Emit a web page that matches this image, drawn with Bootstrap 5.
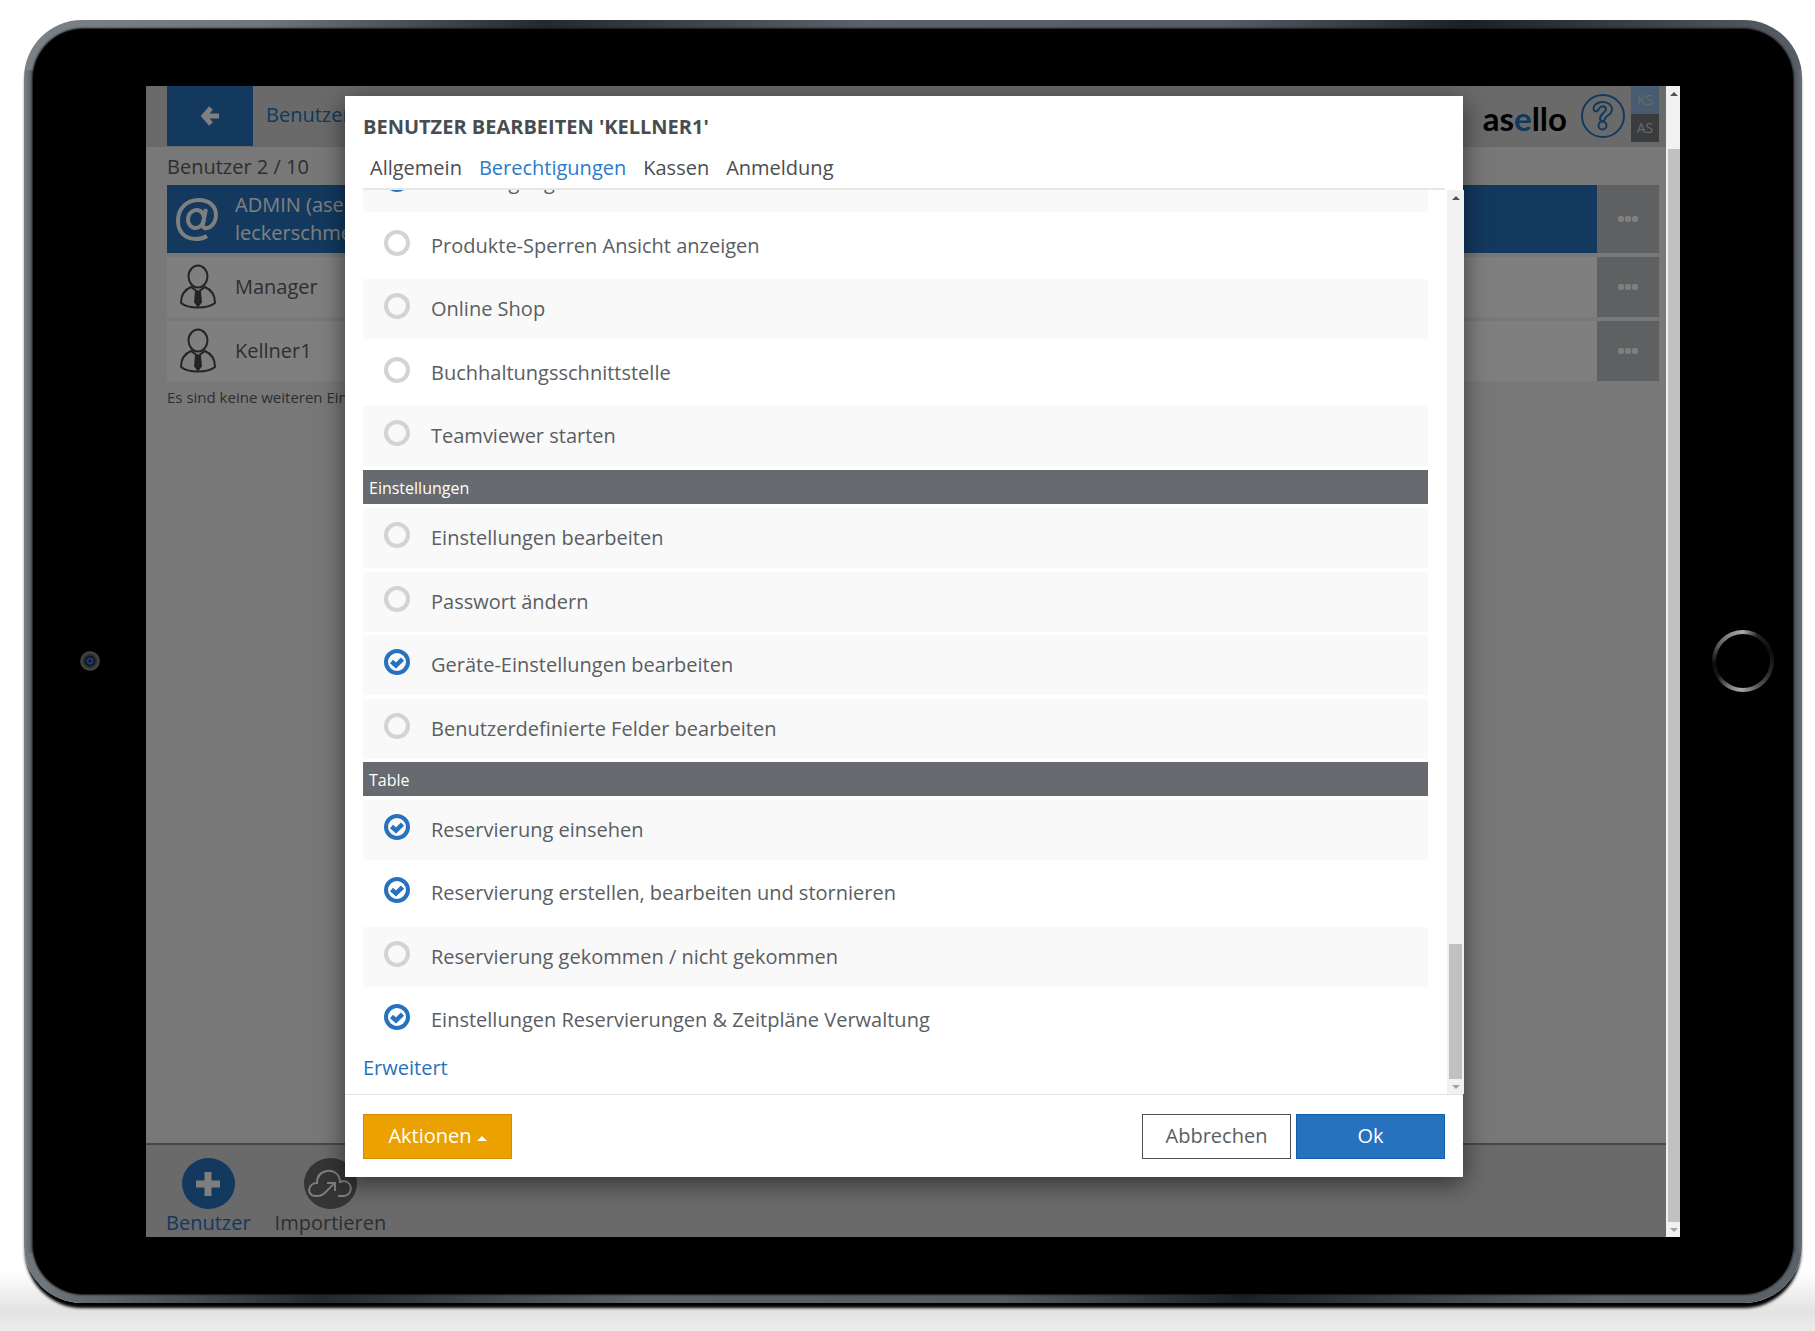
<!DOCTYPE html>
<html lang="de">
<head>
<meta charset="utf-8">
<meta name="viewport" content="width=device-width, initial-scale=1">
<title>asello – Benutzer bearbeiten</title>
<link href="https://cdn.jsdelivr.net/npm/bootstrap@5.3.0/dist/css/bootstrap.min.css" rel="stylesheet">
<style>
:root { --blue: #2672be; --ink: #5a5e62; --dark: #676a6e; }
body { font-family: "Open Sans", "Noto Sans", sans-serif; font-size: 20px; line-height: 28px; color: var(--ink); background: #fff; }
a { color: var(--blue); text-decoration: none; }
button { font-family: inherit; }

/* tablet */
.stage { height: 100vh; min-height: 900px; padding: 20px 13px 28px 24px; background: linear-gradient(to top, #ececec 0, #e3e3e3 20px, #fff 60px, #fff 100%); }
.tablet { padding: 9px; border-radius: 58px; background:
  linear-gradient(to right, #7b8286 0, #555c64 9px, transparent 9px, transparent calc(100% - 9px), #50565e calc(100% - 8px), #696f76 100%) 0 50px / 100% calc(100% - 100px) no-repeat,
  linear-gradient(100deg, #7b8286 0, #70777c 12%, #232a2e 26%, #5b6269 42%, #555c64 60%, #1a2125 72%, #5d636a 90%, #5b6169 100%);
  box-shadow: 0 6px 3px -1px #000; }
.bezel { background: #000; border-radius: 50px; padding: 57px 113px 57px 113px; box-shadow: 0 0 2px 1px #15181b; }
.camera { left: 47px; top: 50%; width: 20px; height: 20px; margin-top: -11px; border-radius: 50%; background: radial-gradient(circle, #050a18 0, #26407c 3px, #0b0f1d 4px, #2b2b2d 6px, #49494b 9px, #222 10px); }
.home-ring { right: 19px; top: 50%; width: 62px; height: 62px; margin-top: -32px; border-radius: 50%; background: conic-gradient(#aaa 0, #222 30deg, #0c0c0c 70deg, #242426 110deg, #58585c 150deg, #a9a8ad 185deg, #77767a 210deg, #151516 240deg, #0c0c0c 265deg, #555559 300deg, #88878c 330deg, #aaa 360deg); }
.home-ring::after { content: ""; position: absolute; inset: 4px; border-radius: 50%; background: #000; }

/* app behind the dialog */
.app { background: #f0f0f0; }
.app-head { height: 61px; background: #d4d4d4; padding: 0 7px 0 21px; }
.back { width: 86px; height: 60px; padding-bottom: 4px; background: var(--blue); border: 0; }
.crumb { margin: 15px 0 0 13px; }
.brand { font: 700 33px/40px Lato, sans-serif; color: #000; }
.brand span { color: var(--blue); }
.mini { width: 28px; height: 28px; font-size: 14px; line-height: 28px; color: #d2d2d2; background: #77787c; text-align: center; }
.mini.up { background: #90b8e3; }
.app-main { padding: 6px 7px 0 21px; }
.user-row { min-height: 60px; background: #fff; margin-bottom: 4px; }
.user-row.active { min-height: 68px; background: var(--blue); color: #fff; }
.user-icon { width: 68px; padding-right: 6px; text-align: center; line-height: 1; }
.more { width: 62px; background: #bec1c5; border: 0; gap: 1px; }
.more i { width: 6px; height: 6px; border-radius: 2px; background: #fff; }
.note { font-size: 15px; line-height: 24px; }
.app-foot { height: 94px; background: #d4d4d4; border-top: 2px solid #919191; padding: 13px 20px 0; gap: 24px; }
.round { width: 53px; height: 53px; border-radius: 50%; background: var(--dark); }
.round.blue { background: var(--blue); }
.shade { inset: 0; background: rgba(0,0,0,.5); }

/* scroll bars */
.bar { background: #f1f1f1; width: 14px; padding: 0 0 0 2px; }
.bar i { display: block; flex: 1; background: #c1c1c1; }
.tri { width: 0; height: 0; border: 4px solid transparent; align-self: center; }
.tri.up { border-top: 0; border-bottom-color: #505050; margin: 6px 0 6px; }
.tri.down { border-bottom: 0; border-top-color: #a3a3a3; margin: 6px 0 5px; }
.outer-bar i { margin-top: 47px; }

/* dialog */
.dlg { inset: 10px 203px 60px 199px; background: #fff; box-shadow: 0 6px 24px rgba(0,0,0,.55); }
.dlg h1 { font-size: 20px; line-height: 28px; font-weight: 700; margin: 0; padding: 17px 18px 0; color: #484d52; }
.tabs { margin: 13px 18px 0; padding: 0 7px 6px; gap: 17px; border-bottom: 2px solid #e7e7e7; }
.tabs a { color: #4b4d50; }
.tabs a.active { color: #2b7acb; }
.scroll { min-height: 0; }
.list { padding: 0 19px 12px 18px; overflow: hidden; }
.perm { flex: none; height: 60px; margin-bottom: 4px; padding-left: 21px; background: #fff; }
.perm:nth-child(even) { margin-bottom: 3px; }
.perm.alt { background: #f9f9f9; }
.perm .form-check-input { width: 26px; height: 26px; margin: 0 21px 6px 0; border: 4px solid #d1d3d4; border-radius: 50%; background-color: transparent; flex: none; }
.perm .form-check-input:checked { border-color: var(--blue); background-size: 18px 18px; background-image: url("data:image/svg+xml,%3Csvg xmlns='http://www.w3.org/2000/svg' viewBox='0 0 18 18'%3E%3Cpath d='M3.500 8.500 8 12.500 14.500 6.200' fill='none' stroke='%232672be' stroke-width='4.500'/%3E%3C/svg%3E"); }
.group { flex: none; height: 34px; margin-bottom: 4px; padding-left: 6px; background: var(--dark); color: #fff; font-size: 16px; line-height: 36px; font-weight: 400; }
.inner-bar { width: 17px; padding: 0 2px; margin-right: -1px; }
.inner-bar i { flex: none; height: 135px; margin-top: auto; }
.dlg-foot { border-top: 1px solid #e5e5e5; padding: 19px 18px 18px; gap: 5px; }
.dlg-foot .btn { width: 149px; height: 45px; font-size: 20px; line-height: 28px; padding: 0 0 1px; border-radius: 0; }
.btn-act { background: #eba200; border-color: #d58d00; color: #fff; }
.btn-act::after { vertical-align: 2px; border-width: 0 5px 5px; border-style: solid; border-color: transparent transparent #fff; content: ""; display: inline-block; margin-left: 5px; }
.btn-cancel { background: #fff; border-color: #4d4f52; color: var(--ink); }
.btn-ok { background: var(--blue); border-color: #1261b0; color: #fff; }
</style>
<script src="https://cdn.jsdelivr.net/npm/bootstrap@5.3.0/dist/js/bootstrap.bundle.min.js"></script>
</head>
<body>
<div class="stage">
 <div class="tablet h-100">
  <div class="bezel h-100 position-relative">
   <div class="camera position-absolute"></div>
   <div class="home-ring position-absolute"></div>
   <div class="d-flex h-100">
    <div class="app d-flex flex-column flex-grow-1 position-relative">
     <header class="app-head d-flex align-items-start">
      <button class="back" type="button" aria-label="Zurück"><svg width="20" height="20" viewBox="0 0 20 20" fill="none" stroke="#fff" stroke-width="5"><path d="M11 2 4 10l7 8M4 10h15"/></svg></button>
      <a class="crumb" href="#">Benutzer</a>
      <span class="brand ms-auto mt-2 pt-1">as<span>e</span>llo</span>
      <svg class="ms-2 mt-2" width="52" height="44" viewBox="0 0 52 44" fill="none" stroke="#2672be" stroke-width="2"><circle cx="28" cy="22" r="21"/><circle cx="27.500" cy="31.500" r="4"/><path d="M20 17c-2-1-2-4 0-6 4-5 16-4 17 4 0 7-7 6-7 10-1 3-5 2-5 0 0-6 6-6 6-10-1-4-6-3-7 0-1 2-3 3-4 2z"/></svg>
      <div class="d-flex flex-column ms-1"><div class="mini up">KS</div><div class="mini">AS</div></div>
     </header>
     <main class="app-main flex-grow-1">
      <div class="mb-1">Benutzer 2 / 10</div>
      <div class="user-row active d-flex align-items-stretch">
       <div class="user-icon align-self-center"><svg width="46" height="46" viewBox="0 0 46 46" fill="none" stroke="#fff" stroke-width="4"><ellipse cx="21" cy="23" rx="8" ry="9" transform="rotate(15 21 23)"/><path d="M31 13 28 27c-1 6 3 6 7 4 4-3 6-8 6-12 0-9-7-15-17-15C12 4 3 12 3 25c0 11 7 18 18 18 4 0 8-1 11-3"/></svg></div>
       <div class="flex-grow-1 align-self-center">ADMIN (asello)<br>leckerschmecker</div>
       <button class="more d-flex justify-content-center align-items-center" type="button" aria-label="Mehr"><i></i><i></i><i></i></button>
      </div>
      <div class="user-row d-flex align-items-stretch">
       <div class="user-icon align-self-center"><svg width="38" height="46" viewBox="0 0 38 46" fill="none" stroke="#45494d" stroke-width="2"><ellipse cx="19" cy="12.500" rx="9.500" ry="11"/><path d="M12 23C5 26 2 32 2 39c7 6 27 6 34 0 0-7-3-13-10-16l-7 5z"/><path fill="#45494d" d="m17 28-1 10 3 4 3-4-1-10z"/></svg></div>
       <div class="flex-grow-1 align-self-center">Manager</div>
       <button class="more d-flex justify-content-center align-items-center" type="button" aria-label="Mehr"><i></i><i></i><i></i></button>
      </div>
      <div class="user-row d-flex align-items-stretch">
       <div class="user-icon align-self-center"><svg width="38" height="46" viewBox="0 0 38 46" fill="none" stroke="#45494d" stroke-width="2"><ellipse cx="19" cy="12.500" rx="9.500" ry="11"/><path d="M12 23C5 26 2 32 2 39c7 6 27 6 34 0 0-7-3-13-10-16l-7 5z"/><path fill="#45494d" d="m17 28-1 10 3 4 3-4-1-10z"/></svg></div>
       <div class="flex-grow-1 align-self-center">Kellner1</div>
       <button class="more d-flex justify-content-center align-items-center" type="button" aria-label="Mehr"><i></i><i></i><i></i></button>
      </div>
      <div class="note">Es sind keine weiteren Einträge vorhanden</div>
     </main>
     <footer class="app-foot d-flex">
      <a class="d-flex flex-column align-items-center" href="#"><span class="round blue d-flex align-items-center justify-content-center"><svg width="24" height="24" stroke="#fff" stroke-width="7"><path d="M12 0v24M0 12h24"/></svg></span>Benutzer</a>
      <a class="d-flex flex-column align-items-center text-reset" href="#"><span class="round d-flex align-items-center justify-content-center"><svg width="46" height="30" viewBox="0 0 46 30" fill="none" stroke="#fff" stroke-width="2"><path d="M31 27h6c9-1 9-14 0-15l-4 1C33 4 25 1 20 2c-7 1-10 6-10 12-9 0-11 12-2 13 10 1 12-7 19-12M20 14h8v8"/></svg></span>Importieren</a>
     </footer>
     <div class="shade position-absolute"></div>

     <section class="dlg position-absolute d-flex flex-column" role="dialog" aria-labelledby="dlgTitle">
      <h1 id="dlgTitle">BENUTZER BEARBEITEN 'KELLNER1'</h1>
      <nav class="tabs d-flex"><a href="#">Allgemein</a><a class="active" href="#">Berechtigungen</a><a href="#">Kassen</a><a href="#">Anmeldung</a></nav>
      <div class="scroll d-flex flex-grow-1">
       <div class="list d-flex flex-column justify-content-end flex-grow-1">
        <div class="perm alt d-flex align-items-center"><input class="form-check-input" type="checkbox" id="p0" checked><label for="p0">Berechtigungen</label></div>
        <div class="perm d-flex align-items-center"><input class="form-check-input" type="checkbox" id="p1"><label for="p1">Produkte-Sperren Ansicht anzeigen</label></div>
        <div class="perm alt d-flex align-items-center"><input class="form-check-input" type="checkbox" id="p2"><label for="p2">Online Shop</label></div>
        <div class="perm d-flex align-items-center"><input class="form-check-input" type="checkbox" id="p3"><label for="p3">Buchhaltungsschnittstelle</label></div>
        <div class="perm alt d-flex align-items-center"><input class="form-check-input" type="checkbox" id="p4"><label for="p4">Teamviewer starten</label></div>
        <h2 class="group">Einstellungen</h2>
        <div class="perm alt d-flex align-items-center"><input class="form-check-input" type="checkbox" id="p5"><label for="p5">Einstellungen bearbeiten</label></div>
        <div class="perm alt d-flex align-items-center"><input class="form-check-input" type="checkbox" id="p6"><label for="p6">Passwort ändern</label></div>
        <div class="perm alt d-flex align-items-center"><input class="form-check-input" type="checkbox" id="p7" checked><label for="p7">Geräte-Einstellungen bearbeiten</label></div>
        <div class="perm alt d-flex align-items-center"><input class="form-check-input" type="checkbox" id="p8"><label for="p8">Benutzerdefinierte Felder bearbeiten</label></div>
        <h2 class="group">Table</h2>
        <div class="perm alt d-flex align-items-center"><input class="form-check-input" type="checkbox" id="p9" checked><label for="p9">Reservierung einsehen</label></div>
        <div class="perm d-flex align-items-center"><input class="form-check-input" type="checkbox" id="p10" checked><label for="p10">Reservierung erstellen, bearbeiten und stornieren</label></div>
        <div class="perm alt d-flex align-items-center"><input class="form-check-input" type="checkbox" id="p11"><label for="p11">Reservierung gekommen / nicht gekommen</label></div>
        <div class="perm d-flex align-items-center"><input class="form-check-input" type="checkbox" id="p12" checked><label for="p12">Einstellungen Reservierungen &amp; Zeitpläne Verwaltung</label></div>
        <a href="#">Erweitert</a>
       </div>
       <div class="bar inner-bar d-flex flex-column"><span class="tri up"></span><i></i><span class="tri down"></span></div>
      </div>
      <div class="dlg-foot d-flex">
       <button class="btn btn-act me-auto" type="button">Aktionen</button>
       <button class="btn btn-cancel" type="button">Abbrechen</button>
       <button class="btn btn-ok" type="button">Ok</button>
      </div>
     </section>
    </div>
    <div class="bar outer-bar d-flex flex-column"><span class="tri up"></span><i></i><span class="tri down"></span></div>
   </div>
  </div>
 </div>
</div>
</body>
</html>
